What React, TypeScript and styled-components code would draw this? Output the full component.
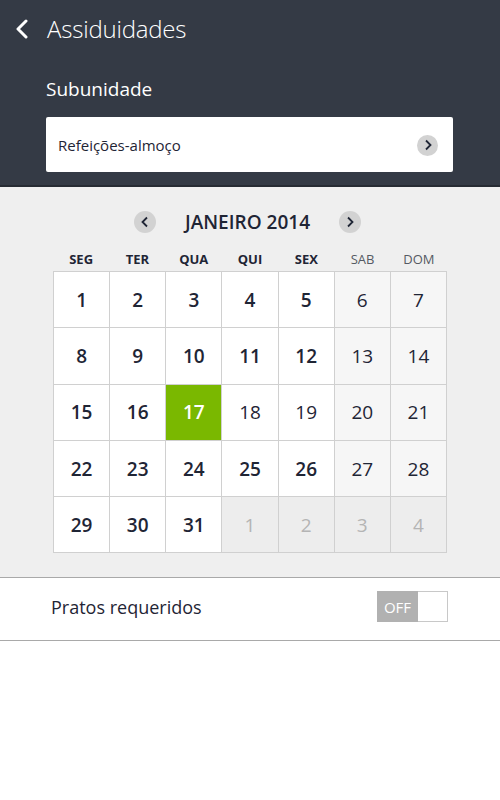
import React, { useState } from 'react';
import styled, { createGlobalStyle } from 'styled-components';

const GlobalStyle = createGlobalStyle`
  html, body {
    margin: 0;
    padding: 0;
    background: #ffffff;
  }
  body {
    font-family: 'Open Sans', 'Liberation Sans', sans-serif;
  }
`;

type Day = {
  label: number;
  weekend?: boolean;
  outside?: boolean;
  bold?: boolean;
  selected?: boolean;
};

const weekdays = ['SEG', 'TER', 'QUA', 'QUI', 'SEX', 'SAB', 'DOM'];

function buildDays(): Day[] {
  const days: Day[] = [];
  for (let i = 1; i <= 35; i++) {
    const col = (i - 1) % 7;
    const weekend = col >= 5;
    if (i > 31) {
      days.push({ label: i - 31, weekend, outside: true });
      continue;
    }
    days.push({
      label: i,
      weekend,
      bold: !weekend && i !== 18 && i !== 19,
      selected: i === 17,
    });
  }
  return days;
}

export default function App() {
  const [pratos, setPratos] = useState(false);
  const days = buildDays();

  return (
    <Root>
      <GlobalStyle />
      <Header>
        <TopBar>
          <BackButton aria-label="Voltar">
            <svg width="14" height="20" viewBox="0 0 14 20">
              <path d="M11 2 L3 10 L11 18" fill="none" stroke="#fff" strokeWidth="3" strokeLinecap="round" strokeLinejoin="round" />
            </svg>
          </BackButton>
          <Title>Assiduidades</Title>
        </TopBar>
        <SectionLabel>Subunidade</SectionLabel>
        <Picker>
          <span>Refeições-almoço</span>
          <RoundArrow $size={21}>
            <svg width="8" height="12" viewBox="0 0 8 12">
              <path d="M2 1.5 L6.5 6 L2 10.5" fill="none" stroke="#1f2535" strokeWidth="1.8" />
            </svg>
          </RoundArrow>
        </Picker>
      </Header>

      <CalendarArea>
        <MonthBar>
          <RoundArrow $size={22}>
            <svg width="8" height="12" viewBox="0 0 8 12">
              <path d="M6 1.5 L1.5 6 L6 10.5" fill="none" stroke="#1f2535" strokeWidth="1.8" />
            </svg>
          </RoundArrow>
          <MonthTitle>JANEIRO 2014</MonthTitle>
          <RoundArrow $size={22}>
            <svg width="8" height="12" viewBox="0 0 8 12">
              <path d="M2 1.5 L6.5 6 L2 10.5" fill="none" stroke="#1f2535" strokeWidth="1.8" />
            </svg>
          </RoundArrow>
        </MonthBar>
        <WeekRow>
          {weekdays.map((w, i) => (
            <WeekLabel key={w} $weekend={i >= 5}>
              {w}
            </WeekLabel>
          ))}
        </WeekRow>
        <Grid>
          {days.map((d, i) => (
            <Cell
              key={i}
              $weekend={d.weekend}
              $outside={d.outside}
              $bold={d.bold}
              $selected={d.selected}
            >
              {d.label}
            </Cell>
          ))}
        </Grid>
      </CalendarArea>

      <SettingRow>
        <SettingLabel>Pratos requeridos</SettingLabel>
        <Toggle onClick={() => setPratos(!pratos)}>
          <ToggleOff>OFF</ToggleOff>
          <ToggleKnob />
        </Toggle>
      </SettingRow>
    </Root>
  );
}

const Root = styled.div`
  width: 500px;
  min-height: 800px;
  background: #ffffff;
  color: #1f2535;
`;

const Header = styled.header`
  background: #343a45;
  border-bottom: 2px solid #262b33;
  padding: 0 47px 14px 46px;
  height: 187px;
  box-sizing: border-box;
`;

const TopBar = styled.div`
  display: flex;
  align-items: center;
  height: 57px;
  margin-left: -31px;
`;

const BackButton = styled.button`
  border: 0;
  background: none;
  padding: 0;
  width: 32px;
  display: flex;
  align-items: center;
  cursor: pointer;
`;

const Title = styled.h1`
  margin: 0;
  font-size: 24px;
  font-weight: 300;
  color: #ffffff;
  letter-spacing: -0.2px;
`;

const SectionLabel = styled.div`
  margin-top: 19px;
  font-size: 19px;
  font-weight: 500;
  color: #ffffff;
  height: 26px;
  line-height: 26px;
`;

const Picker = styled.div`
  margin-top: 15px;
  height: 55px;
  background: #ffffff;
  border-radius: 2px;
  display: flex;
  align-items: center;
  justify-content: space-between;
  padding: 1px 15px 0 12px;
  box-sizing: border-box;
  font-size: 15px;
  color: #1f2535;
`;

const RoundArrow = styled.span<{ $size: number }>`
  width: ${(p) => p.$size}px;
  height: ${(p) => p.$size}px;
  border-radius: 50%;
  background: #d2d2d2;
  display: inline-flex;
  align-items: center;
  justify-content: center;
  cursor: pointer;
`;

const CalendarArea = styled.section`
  background: #efefef;
  border-bottom: 1px solid #a9a9a9;
  padding: 22px 0 24px;
  display: flex;
  flex-direction: column;
  align-items: center;
`;

const MonthBar = styled.div`
  display: flex;
  align-items: center;
  gap: 16px;
  height: 26px;
  margin-left: -5px;
`;

const MonthTitle = styled.div`
  font-size: 19px;
  font-weight: 600;
  color: #1f2535;
  width: 151px;
  text-align: center;
  white-space: nowrap;
`;

const WeekRow = styled.div`
  margin-top: 11px;
  width: 394px;
  display: grid;
  grid-template-columns: repeat(7, 1fr);
  height: 25px;
  align-items: center;
`;

const WeekLabel = styled.div<{ $weekend: boolean }>`
  text-align: center;
  font-size: 13px;
  font-weight: ${(p) => (p.$weekend ? 400 : 700)};
  color: ${(p) => (p.$weekend ? '#555a63' : '#1f2535')};
`;

const Grid = styled.div`
  width: 394px;
  display: grid;
  grid-template-columns: repeat(7, 1fr);
  grid-auto-rows: 55.3px;
  gap: 1px;
  padding: 1px;
  box-sizing: border-box;
  background: #d0d0d0;
`;

const Cell = styled.div<{
  $weekend?: boolean;
  $outside?: boolean;
  $bold?: boolean;
  $selected?: boolean;
}>`
  display: flex;
  align-items: center;
  justify-content: center;
  font-size: 19px;
  font-weight: ${(p) => (p.$bold ? 600 : 400)};
  background: ${(p) =>
    p.$selected ? '#7ab800' : p.$outside ? '#ededed' : p.$weekend ? '#f6f6f6' : '#ffffff'};
  color: ${(p) => (p.$selected ? '#ffffff' : p.$outside ? '#b4b4b4' : '#1f2535')};
`;

const SettingRow = styled.div`
  height: 63px;
  box-sizing: border-box;
  border-bottom: 1px solid #a9a9a9;
  display: flex;
  align-items: center;
  justify-content: space-between;
  padding: 0 52px 5px 51px;
`;

const SettingLabel = styled.span`
  font-size: 18px;
  color: #1f2535;
`;

const Toggle = styled.div`
  display: flex;
  width: 71px;
  height: 31px;
  box-sizing: border-box;
  border: 1px solid #c8c8c8;
  cursor: pointer;
`;

const ToggleOff = styled.span`
  width: 41px;
  margin: -1px 0 -1px -1px;
  background: #b1b1b1;
  color: #ffffff;
  font-size: 15px;
  display: flex;
  align-items: center;
  justify-content: center;
`;

const ToggleKnob = styled.span`
  flex: 1;
  background: #ffffff;
`;
